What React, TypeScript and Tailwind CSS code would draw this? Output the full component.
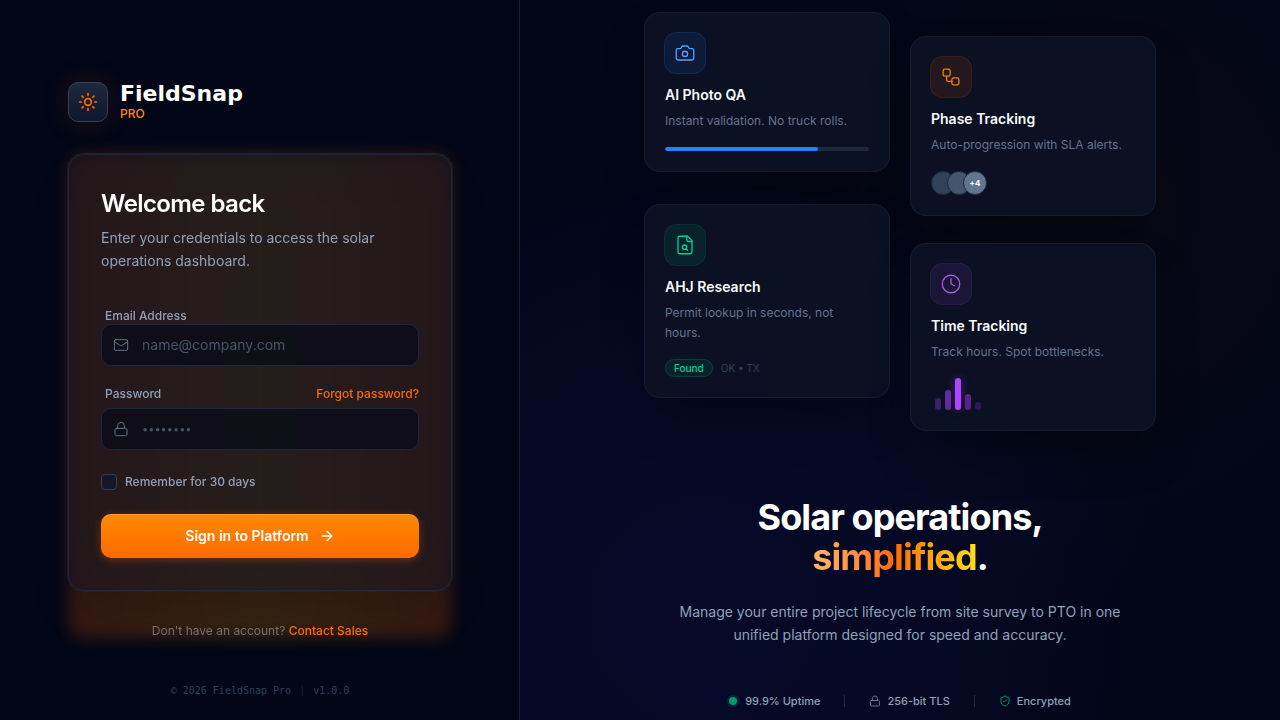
import React, { useState } from 'react';
import { ArrowRight, Camera, Clock, Lock, Mail, ShieldCheck, Sun, Workflow } from 'lucide-react';

interface FeatureCardProps {
  title: string;
  description: string;
  icon: React.ReactNode;
  iconClass: string;
  children: React.ReactNode;
}

const bars = [
  { id: 'mon', className: 'h-3 bg-[#3d2066]' },
  { id: 'tue', className: 'h-5 bg-[#5f2d9c]' },
  { id: 'wed', className: 'h-8 bg-[#ad46ff] shadow-[0_0_10px_rgba(173,70,255,0.4)]' },
  { id: 'thu', className: 'h-4 bg-[#522787]' },
  { id: 'fri', className: 'h-2 bg-[#2d1a50]' }
];

const FileSearchIcon: React.FC = () => (
  <svg
    className="h-5 w-5"
    viewBox="0 0 24 24"
    fill="none"
    stroke="currentColor"
    strokeWidth={1.5}
    strokeLinecap="round"
    strokeLinejoin="round"
    aria-hidden="true"
  >
    <path d="M15 2H6a2 2 0 0 0-2 2v16a2 2 0 0 0 2 2h12a2 2 0 0 0 2-2V7Z" />
    <path d="M14 2v4a2 2 0 0 0 2 2h4" />
    <circle cx="11.5" cy="14.5" r="2.5" />
    <path d="M13.3 16.3 15 18" />
  </svg>
);

const FeatureCard: React.FC<FeatureCardProps> = ({ title, description, icon, iconClass, children }) => (
  <article className="rounded-2xl border border-white/5 bg-[#0b1022] p-5 shadow-2xl shadow-black/40">
    <div className={`mb-3 flex h-10 w-10 scale-105 items-center justify-center rounded-xl border ${iconClass}`}>
      {icon}
    </div>
    <h3 className="mb-1.5 text-sm leading-5 font-semibold text-slate-50">{title}</h3>
    <p className="mb-4 text-xs leading-5 text-slate-500">{description}</p>
    {children}
  </article>
);

const LoginForm: React.FC = () => {
  const [email, setEmail] = useState('');
  const [password, setPassword] = useState('');
  const [remember, setRemember] = useState(false);

  return (
    <form onSubmit={(e) => e.preventDefault()}>
      {/* Email */}
      <label htmlFor="email" className="ml-1 block text-xs font-medium text-slate-400">Email Address</label>
      <div className="relative mb-5">
        <Mail className="absolute top-1/2 left-3 h-4 w-4 -translate-y-1/2 text-slate-500" strokeWidth={1.5} />
        <input
          id="email"
          type="email"
          value={email}
          onChange={(e) => setEmail(e.target.value)}
          placeholder="name@company.com"
          className="h-[42px] w-full rounded-[10px] border border-slate-800 bg-[#020618]/60 pr-4 pl-10 text-sm text-slate-200 outline-none placeholder:text-slate-600"
        />
      </div>

      {/* Password */}
      <div className="mb-1.5 flex items-center justify-between text-xs font-medium">
        <label htmlFor="password" className="ml-1 text-slate-400">Password</label>
        <a href="#forgot" className="text-[#ff6900]">Forgot password?</a>
      </div>
      <div className="relative mb-6">
        <Lock className="absolute top-1/2 left-3 h-4 w-4 -translate-y-1/2 text-slate-500" strokeWidth={1.5} />
        <input
          id="password"
          type="password"
          value={password}
          onChange={(e) => setPassword(e.target.value)}
          placeholder="••••••••"
          className="h-[42px] w-full rounded-[10px] border border-slate-800 bg-[#020618]/60 pr-4 pl-10 text-[11px] text-slate-200 outline-none placeholder:text-slate-600"
        />
      </div>

      <div className="mb-6 flex items-center gap-2">
        <input
          id="remember"
          type="checkbox"
          checked={remember}
          onChange={(e) => setRemember(e.target.checked)}
          className="h-4 w-4 appearance-none rounded border border-slate-700 bg-[#151726] checked:bg-orange-500"
        />
        <label htmlFor="remember" className="text-xs font-medium text-slate-400">Remember for 30 days</label>
      </div>

      <button
        type="submit"
        className="flex h-11 w-full items-center justify-center gap-2.5 rounded-[10px] bg-linear-to-b from-[#ff8904] to-[#ff6900] text-sm font-semibold text-white shadow-[0_2px_10px_rgba(255,105,0,0.3),inset_0_1px_0_rgba(255,255,255,0.2)]"
      >
        Sign in to Platform
        <ArrowRight className="h-4 w-4" strokeWidth={2} />
      </button>
    </form>
  );
};

const App: React.FC = () => {
  return (
    <div className="flex min-h-screen bg-[#020617] font-['Inter',sans-serif]">
      {/* Sign in column */}
      <main className="flex w-[520px] shrink-0 flex-col border-r border-slate-800/70 pt-15 pr-[67px] pl-[68px]">
        <div className="flex flex-1 flex-col justify-center">
          <header className="mb-8 flex items-center gap-3">
            <div className="flex h-10 w-10 items-center justify-center rounded-[10px] border border-slate-700 bg-linear-to-b from-slate-800 to-slate-900 text-[#ff6900] shadow-[0_0_30px_rgba(255,105,0,0.14)]">
              <Sun className="h-5 w-5" strokeWidth={2} />
            </div>
            <div>
              <div className="font-['DejaVu_Sans',sans-serif] text-[22px] leading-6 font-bold text-white">FieldSnap</div>
              <div className="text-xs leading-4 font-medium text-[#fe8a04]">PRO</div>
            </div>
          </header>

          <div className="relative">
            <div className="absolute inset-0 rounded-2xl bg-linear-to-r from-[#ff6000] via-[#fe9a00] to-[#ff6000] opacity-20 blur-sm" />
            <section className="relative rounded-2xl border border-slate-800 bg-[#0f172b]/40 p-8 shadow-2xl ring-1 shadow-black/20 ring-slate-800/60 backdrop-blur-xl">
              <h1 className="mb-[5px] text-2xl leading-[34px] font-semibold tracking-tight text-white">Welcome back</h1>
              <p className="mb-9 text-sm leading-[23px] text-slate-400">
                Enter your credentials to access the solar operations dashboard.
              </p>
              <LoginForm />
            </section>
            <p className="relative mt-8 text-center text-xs leading-4 text-[#7a706a]">
              Don't have an account? <a href="#sales" className="font-medium text-[#ff6900]">Contact Sales</a>
            </p>
          </div>
        </div>

        <footer className="flex h-15 items-center justify-center gap-2 font-['DejaVu_Sans_Mono',monospace] text-[10px] text-slate-700">
          <span>© 2026 FieldSnap Pro</span>
          <span className="text-slate-800">|</span>
          <span>v1.0.0</span>
        </footer>
      </main>

      {/* Product showcase */}
      <aside className="flex flex-1 flex-col items-center bg-[radial-gradient(circle_at_24%_85%,rgba(25,27,120,0.18),rgba(25,27,120,0.14)_25%,transparent_55%),radial-gradient(circle_at_75%_30%,rgba(60,30,20,0.12),transparent_50%)] pt-3 pb-2">
        <div className="grid w-full max-w-[512px] grid-cols-2 items-start gap-5">
          <div className="flex flex-col gap-8">
            <FeatureCard
              title="AI Photo QA"
              description="Instant validation. No truck rolls."
              icon={<Camera className="h-5 w-5" strokeWidth={1.5} />}
              iconClass="border-[#2b7fff]/15 bg-[#2b7fff]/10 text-[#51a2ff]"
            >
              <div className="h-1 overflow-hidden rounded-full bg-slate-800">
                <div className="h-full w-3/4 rounded-full bg-[#2b7fff]" />
              </div>
            </FeatureCard>
            <FeatureCard
              title="AHJ Research"
              description="Permit lookup in seconds, not hours."
              icon={<FileSearchIcon />}
              iconClass="border-[#00bc7d]/10 bg-[#00bc7d]/10 text-[#00d492]"
            >
              <div className="flex items-center gap-2 text-[10px]">
                <span className="rounded-full border border-[#00bc7d]/20 bg-[#00bc7d]/10 px-2 leading-4 font-medium text-[#00d492]">Found</span>
                <span className="text-slate-700">OK • TX</span>
              </div>
            </FeatureCard>
          </div>

          <div className="flex flex-col gap-[27px] pt-6">
            <FeatureCard
              title="Phase Tracking"
              description="Auto-progression with SLA alerts."
              icon={<Workflow className="h-5 w-5" strokeWidth={1.5} />}
              iconClass="border-[#ff6900]/10 bg-[#ff6900]/10 text-[#f08208]"
            >
              <div className="flex -space-x-2">
                <span className="h-6 w-6 rounded-full border border-slate-800 bg-slate-700" />
                <span className="h-6 w-6 rounded-full border border-slate-800 bg-slate-600" />
                <span className="flex h-6 w-6 items-center justify-center rounded-full border border-slate-800 bg-slate-500 text-[8px] font-bold text-white">+4</span>
              </div>
            </FeatureCard>
            <FeatureCard
              title="Time Tracking"
              description="Track hours. Spot bottlenecks."
              icon={<Clock className="h-5 w-5" strokeWidth={1.5} />}
              iconClass="border-[#ad46ff]/10 bg-[#ad46ff]/10 text-[#a35fdc]"
            >
              <div className="flex h-8 items-end gap-1 px-1">
                {bars.map((bar) => (
                  <div key={bar.id} className={`w-1.5 rounded-full ${bar.className}`} />
                ))}
              </div>
            </FeatureCard>
          </div>
        </div>

        <div className="mt-[66px] text-center">
          <h2 className="mb-[23px] text-4xl leading-10 font-bold tracking-tight text-white">
            Solar operations,
            <br />
            <span className="bg-linear-to-r from-[#ffb86a] via-[#ff6900] to-[#ffdf20] bg-clip-text text-transparent">simplified</span>.
          </h2>
          <p className="mx-auto max-w-md text-sm leading-[23px] text-slate-400">
            Manage your entire project lifecycle from site survey to PTO in one unified platform designed for speed and accuracy.
          </p>
        </div>

        <ul className="mt-[47px] flex items-center text-[11px] leading-4 font-medium text-slate-400">
          <li className="flex items-center gap-2">
            <span className="h-2 w-2 rounded-full bg-[#009966] ring-2 ring-[#00bc7d]/15" />
            99.9% Uptime
          </li>
          <li className="mx-6 h-3 w-px bg-slate-800" />
          <li className="flex items-center gap-1.5">
            <Lock className="h-3 w-3 text-slate-500" strokeWidth={2} />
            256-bit TLS
          </li>
          <li className="mx-6 h-3 w-px bg-slate-800" />
          <li className="flex items-center gap-1.5">
            <ShieldCheck className="h-3 w-3 text-[#009966]" strokeWidth={2} />
            Encrypted
          </li>
        </ul>
      </aside>
    </div>
  );
};

export default App;
